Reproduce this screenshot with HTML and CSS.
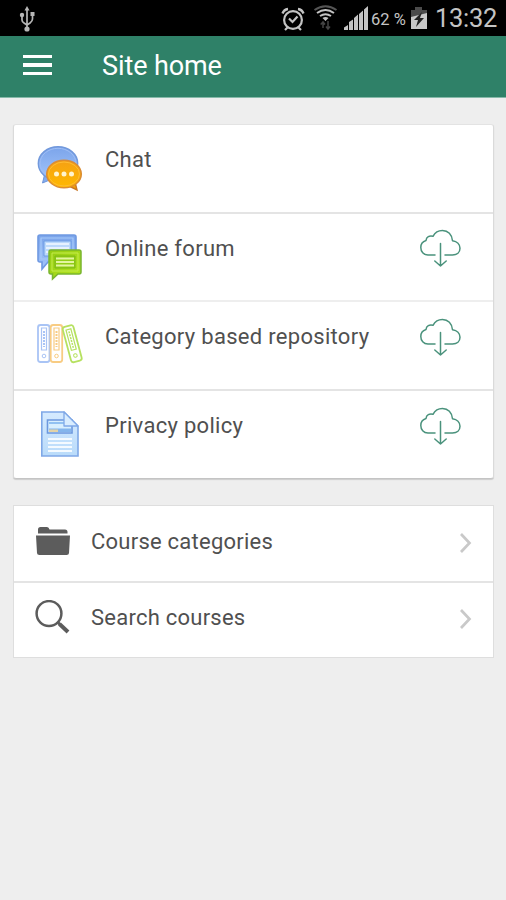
FILE: index.html
```html
<!DOCTYPE html>
<html lang="en">
<head>
<meta charset="utf-8">
<title>Site home</title>
<link rel="stylesheet" href="styles.css">
</head>
<body>
<svg class="defs" width="0" height="0" aria-hidden="true">
  <defs>
    <linearGradient id="blue" x1="0" y1="0" x2="0" y2="1"><stop offset="0" stop-color="#7ba4ea"/><stop offset="1" stop-color="#a3c5fb"/></linearGradient>
    <linearGradient id="orange" x1="0" y1="0" x2="0" y2="1"><stop offset="0" stop-color="#f5a014"/><stop offset="1" stop-color="#ffb900"/></linearGradient>
    <linearGradient id="green" x1="0" y1="0" x2="1" y2="1"><stop offset="0" stop-color="#93cb12"/><stop offset="1" stop-color="#b5e51f"/></linearGradient>
    <linearGradient id="page" x1="0" y1="0" x2="0" y2="1"><stop offset="0" stop-color="#d5eaff"/><stop offset="1" stop-color="#b9dbfa"/></linearGradient>
    <symbol id="cloud" viewBox="0 0 44 40">
      <g fill="none" stroke="#4a927c" stroke-width="1.500" stroke-linecap="round" stroke-linejoin="round">
        <path d="M17 27H10C5.500 27 2.800 23.500 2.800 19.500C2.800 16 5 13.400 8 12.500C8.300 9 11.500 7.200 15 8.300C17 4.500 20.500 2.600 24.500 2.600C30 2.600 34 6.500 34.500 12.800C39 13.500 42 16.500 42 20.300C42 24.300 39 27 34.500 27H27"/>
        <path d="M22.500 15.500V38M16.800 33L22.500 38L28.200 33"/>
      </g>
    </symbol>
    <symbol id="chevron" viewBox="0 0 14 22"><path d="M2 2L10.500 11L2 20" fill="none" stroke="#c9c9c9" stroke-width="2.700"/></symbol>
  </defs>
</svg>
<div class="status">
  <svg class="usb" viewBox="0 0 18 28" fill="none" stroke="#b6b6b6" stroke-width="1.700">
    <path d="M9 4V24M4 10V14Q4 16 6 17L9 19M14.500 9V13Q14.500 15 12 17L9 19"/>
    <path d="M9 0L11.500 4.500H6.500Z" fill="#b6b6b6" stroke="none"/>
    <circle cx="4" cy="9" r="2.200" fill="#b6b6b6" stroke="none"/><path d="M12.500 6h4v4h-4z" fill="#b6b6b6" stroke="none"/>
    <circle cx="9" cy="23" r="2.600" fill="#b6b6b6" stroke="none"/>
  </svg>
  <svg class="indicators" viewBox="280 0 92 36">
    <g fill="none" stroke="#c4c4c4" stroke-width="2.200">
      <circle cx="293" cy="20" r="8.900"/><path d="M289 18.500L292.500 22L297.500 16.500M288 27L285 30M298 27L301 30"/>
      <path d="M282.500 13.500Q284 9.500 288 9M298 9Q302 9.500 303.500 13.500" stroke-width="2.400"/>
    </g>
    <g fill="none" stroke-width="2">
      <path d="M314.500 10Q325.500 2.500 336.500 10" stroke="#555"/>
      <path d="M317 13Q325.500 7 334 13M320 16Q325.500 12.500 331 16" stroke="#c4c4c4"/>
      <path d="M322.500 18Q325.500 16 328.500 18L325.500 21Z" fill="#c4c4c4" stroke="none"/>
      <path d="M323 22V28M320.700 24.500L323 22L325 24.500M328 21V29M326 26.500L328 29L330 26.500" stroke="#444" stroke-width="1.500"/>
    </g>
    <path d="M344 30V27.500L348 25V30ZM349 30V22L353 19.500V30ZM354 30V18L358 14.500V30ZM359 30V14L363 10.500V30ZM364 30V9.500L368 6V30Z" fill="#c4c4c4"/>
  </svg>
  <span class="percent">62 %</span>
  <svg class="battery" viewBox="0 0 18 24">
    <path d="M5 1h7v3h5v9H1V4h4z" fill="#4b4b4b"/><path d="M1 11L17 7V23H1Z" fill="#c8c8c8"/>
    <path d="M12 6L4 14H8L6 21L14 12H10Z" fill="#222"/>
  </svg>
  <span class="time">13:32</span>
</div>
<header class="bar">
  <div class="menu"><i></i><i></i><i></i></div>
  <h1>Site home</h1>
</header>
<main>
  <section class="card modules">
    <div class="row">
      <svg class="icon" viewBox="0 0 48 48">
        <path d="M8.500 30L6.500 38L16 34" fill="#84acee" stroke="#6f96da"/>
        <ellipse cx="22" cy="18.500" rx="19.700" ry="16.800" fill="url(#blue)" stroke="#7299dc" stroke-width="1.400"/>
        <ellipse cx="22" cy="18.500" rx="18" ry="15.200" fill="none" stroke="#9fbef5"/>
        <path d="M33 41L41 45L39 37" fill="#f6a300" stroke="#c87726" stroke-width="1.400"/>
        <ellipse cx="28" cy="29" rx="17.300" ry="13.800" fill="url(#orange)" stroke="#da8c35" stroke-width="1.500"/>
        <ellipse cx="28" cy="29" rx="15.500" ry="12" fill="none" stroke="#ffbc33"/>
        <g fill="#fff4cf"><circle cx="20.500" cy="29" r="2.500"/><circle cx="28" cy="29" r="2.500"/><circle cx="35.500" cy="29" r="2.500"/></g>
      </svg>
      <span class="label">Chat</span>
    </div>
    <div class="row">
      <svg class="icon" viewBox="0 0 48 48">
        <path d="M4 2H38Q40 2 40 4V27Q40 29 38 29H12L6 36V29H4Q2 29 2 27V4Q2 2 4 2Z" fill="url(#blue)" stroke="#6f99e2" stroke-width="1.600"/>
        <path d="M5 5H37V26H5Z" fill="none" stroke="#a6cafa" stroke-width="1.200"/><path d="M8 8H35V23H8Z" fill="#bcd9fb" stroke="#6d9de5"/>
        <path d="M10 11H33M10 15H33M10 19H25" stroke="#e6f1ff" stroke-width="2"/>
        <path d="M15 17H43Q45 17 45 19V39Q45 41 43 41H22L16.500 46V41H15Q13 41 13 39V19Q13 17 15 17Z" fill="url(#green)" stroke="#79b52f" stroke-width="1.500"/>
        <path d="M16 20H42V38H16Z" fill="none" stroke="#c5ec4c"/><path d="M19 23H39V35H19Z" fill="#92ce17" stroke="#7cb817"/>
        <path d="M20 25.500H38M20 29H38M20 32.500H38" stroke="#e3f5a0" stroke-width="2"/>
      </svg>
      <span class="label">Online forum</span>
      <svg class="cloud"><use href="#cloud"/></svg>
    </div>
    <div class="row">
      <svg class="icon" viewBox="0 0 48 48">
        <g fill="#fff" stroke-width="1.800">
          <g stroke="#a9c4f5"><rect x="2" y="3" width="11.500" height="37" rx="2.500"/><path d="M5.500 6h5v22h-5z" stroke-width="1.200"/><path d="M8 9v16" stroke-width="2" stroke-dasharray="2 1"/><circle cx="8" cy="34" r="1.800" stroke-width="1"/></g>
          <g stroke="#f8cc83"><rect x="14.700" y="3" width="11.500" height="37" rx="2.500"/><path d="M18 6h5v22h-5z" stroke-width="1.200"/><path d="M20.500 9v16" stroke-width="2" stroke-dasharray="2 1"/><circle cx="20.500" cy="34" r="1.800" stroke-width="1"/></g>
          <g stroke="#b6e160" transform="rotate(-15 36 22)"><rect x="30.800" y="3.500" width="11" height="36.500" rx="2.500"/><path d="M33.800 7h5v21h-5z" stroke-width="1.200"/><path d="M36.300 9v17" stroke-width="1.500" stroke-dasharray="2 1"/><circle cx="36.300" cy="34" r="1.800" stroke-width="1"/></g>
        </g>
      </svg>
      <span class="label">Category based repository</span>
      <svg class="cloud"><use href="#cloud"/></svg>
    </div>
    <div class="row">
      <svg class="icon" viewBox="0 0 48 48">
        <path d="M5.800 1H28L42 15V45H5.800Z" fill="url(#page)" stroke="#7fa8e7" stroke-width="1.600"/>
        <path d="M11.500 9H36V22H11.500Z" fill="#d8efff" stroke="#6c98de" stroke-width="1.600"/>
        <path d="M13 11H28V13H13Z" fill="#91c1f2"/><path d="M13 17.500H35V21H13Z" fill="#84b5ec"/><path d="M13 18.500H22V21H13Z" fill="#e2d3a8"/>
        <path d="M28 1V15H42Z" fill="#d9edff" stroke="#7fa8e7" stroke-width="1.300" stroke-linejoin="round"/>
        <path d="M12 28H36M12 32H36M12 36H36M12 40H36" stroke="#f4faff" stroke-width="2.200"/>
      </svg>
      <span class="label">Privacy policy</span>
      <svg class="cloud"><use href="#cloud"/></svg>
    </div>
  </section>
  <nav class="card links">
    <div class="row">
      <svg class="glyph" viewBox="0 0 36 36" fill="#5c5c5c"><path d="M3 9.500V5.500Q3 3 5.500 3H12Q14 3 14.500 5.500H30Q32.500 5.500 32.500 8V9.500Z"/><path d="M1 11.500H35L34 29Q34 31 31.500 31H4.500Q2 31 2 29Z"/></svg>
      <span class="label">Course categories</span>
      <svg class="chevron"><use href="#chevron"/></svg>
    </div>
    <div class="row">
      <svg class="glyph" viewBox="0 0 36 36" fill="none" stroke="#5c5c5c"><circle cx="14" cy="13.500" r="12.400" stroke-width="2.500"/><path d="M22.500 22L25 24.500" stroke-width="3"/><path d="M24.500 24L33 32" stroke-width="4"/></svg>
      <span class="label">Search courses</span>
      <svg class="chevron"><use href="#chevron"/></svg>
    </div>
  </nav>
</main>
</body>
</html>
```
FILE: styles.css
```css
* { box-sizing: border-box; }
body { margin: 0; min-height: 900px; background: #eee; font-family: Roboto, "Liberation Sans", sans-serif; color: #505050; }
svg { display: block; flex: none; }
.defs { position: absolute; }
.status { display: flex; align-items: center; height: 36px; padding-left: 18px; background: #000; color: #c4c4c4; }
.usb { width: 18px; height: 28px; margin-top: 3px; }
.indicators { width: 92px; height: 36px; margin-left: 244px; }
.percent { width: 39px; margin: 3px 0 0 -1px; font-size: 16.5px; line-height: 20px; white-space: nowrap; }
.battery { width: 18px; height: 24px; }
.time { margin-left: 7px; font-size: 25.5px; letter-spacing: -.3px; line-height: 36px; }
.bar { display: flex; align-items: center; height: 62px; padding-left: 23px; background: #2f8168; border-bottom: 1px solid #86b9a9; color: #fff; }
.menu { display: flex; flex-direction: column; gap: 5px; width: 29px; margin-top: -3px; }
.menu i { height: 3.500px; background: #fff; }
.bar h1 { margin: -1px 0 0 50px; font-size: 27px; letter-spacing: -.1px; line-height: 36px; font-weight: 400; }
main { display: flex; flex-direction: column; gap: 26px; padding: 26px 12px 26px 13px; }
.card { background: #fff; border: 1px solid #dedede; }
.row { display: flex; align-items: flex-start; }
.row + .row { border-top: 2px solid #e4e4e4; }
.label { flex: 1; font-size: 22px; line-height: 28px; letter-spacing: .3px; white-space: nowrap; }
.modules { height: 355px; border-color: #e3e3e3 #dadada #c4c4c4; border-radius: 3px; box-shadow: 0 1px 1px #ccc; display: grid; grid-template-rows: 87px 88px 89px 89px; }
.modules .row { padding: 20px 31px 0 21.500px; }
.modules .row + .row:nth-child(3) { border-color: #eee; }
.icon { width: 48px; height: 48px; }
.modules .row:nth-child(2) { padding-top: 19px; }
.modules .label { margin: 1px 0 0 21.500px; }
.modules .row:first-child .label { margin-top: 0; }
.modules .row:nth-child(2) .label { margin-top: 2px; }
.modules .row:first-child .label { margin-top: 1px; }
.cloud { width: 44px; height: 40px; margin-top: -5px; }
.links { height: 153px; display: grid; grid-template-rows: 75px 76px; }
.links .row { padding: 18px 20px 0 21px; }
.links .row + .row { padding-top: 17px; }
.glyph { width: 36px; height: 36px; }
.links .label { margin: 4px 0 0 20px; letter-spacing: .24px; }
.chevron { width: 14px; height: 22px; margin-top: 8px; }
```
